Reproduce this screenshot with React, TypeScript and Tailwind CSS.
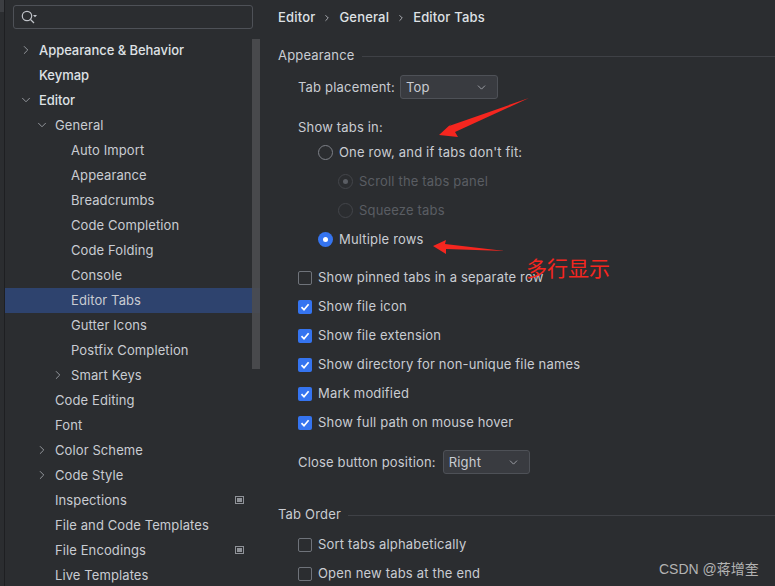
import { ChevronDown, ChevronRight } from "lucide-react";

type TreeItem = {
  label: string;
  indent: 0 | 1 | 2;
  arrow?: "right" | "down";
  bold?: boolean;
  selected?: boolean;
  badge?: boolean;
};

const tree: TreeItem[] = [
  { label: "Appearance & Behavior", indent: 0, arrow: "right", bold: true },
  { label: "Keymap", indent: 0, bold: true },
  { label: "Editor", indent: 0, arrow: "down", bold: true },
  { label: "General", indent: 1, arrow: "down" },
  { label: "Auto Import", indent: 2 },
  { label: "Appearance", indent: 2 },
  { label: "Breadcrumbs", indent: 2 },
  { label: "Code Completion", indent: 2 },
  { label: "Code Folding", indent: 2 },
  { label: "Console", indent: 2 },
  { label: "Editor Tabs", indent: 2, selected: true },
  { label: "Gutter Icons", indent: 2 },
  { label: "Postfix Completion", indent: 2 },
  { label: "Smart Keys", indent: 2, arrow: "right" },
  { label: "Code Editing", indent: 1 },
  { label: "Font", indent: 1 },
  { label: "Color Scheme", indent: 1, arrow: "right" },
  { label: "Code Style", indent: 1, arrow: "right" },
  { label: "Inspections", indent: 1, badge: true },
  { label: "File and Code Templates", indent: 1 },
  { label: "File Encodings", indent: 1, badge: true },
  { label: "Live Templates", indent: 1 },
];

const indentClass = {
  0: "pl-[34px]",
  1: "pl-[50px]",
  2: "pl-[66px]",
};

const arrowClass = {
  0: "left-[14px]",
  1: "left-[30px]",
  2: "left-[46px]",
};

function TreeRow({ item }: { item: TreeItem }) {
  return (
    <div
      className={`relative flex h-[25px] shrink-0 items-center ${indentClass[item.indent]} ${
        item.selected ? "bg-[#2e436e]" : ""
      } ${item.bold ? "font-medium tracking-[-0.05px] text-[#dfe1e5]" : "tracking-[0.1px] text-[#c9ccd2]"}`}
    >
      {item.arrow === "right" && (
        <ChevronRight className={`absolute top-[5px] h-[14px] w-[14px] text-[#a0a3a9] ${arrowClass[item.indent]}`} strokeWidth={1.5} />
      )}
      {item.arrow === "down" && (
        <ChevronDown className={`absolute top-[5px] h-[14px] w-[14px] text-[#a0a3a9] ${arrowClass[item.indent]}`} strokeWidth={1.5} />
      )}
      <span>{item.label}</span>
      {item.badge && (
        <span className="absolute left-[230px] top-[8px] flex h-[8px] w-[9px] items-center border border-[#8f9298] px-px">
          <span className="h-[4px] w-full bg-[#8f9298]" />
        </span>
      )}
    </div>
  );
}

function Checkbox({ label, checked }: { label: string; checked?: boolean }) {
  return (
    <div className="flex h-[29px] shrink-0 items-center gap-[6px]">
      {checked ? (
        <span className="flex h-[14px] w-[14px] items-center justify-center rounded-[2px] bg-[#3574f0]">
          <svg width="10" height="10" viewBox="0 0 10 10" fill="none">
            <path d="M1.5 5.2 4 7.8 8.6 2.2" stroke="#fff" strokeWidth="1.7" />
          </svg>
        </span>
      ) : (
        <span className="h-[14px] w-[14px] rounded-[2px] border border-[#6f737a]" />
      )}
      <span>{label}</span>
    </div>
  );
}

function Radio({ label, state, disabled }: { label: string; state?: "on" | "dot"; disabled?: boolean }) {
  let mark = <span className={`h-[15px] w-[15px] rounded-full border ${disabled ? "border-[#43454a]" : "border-[#7e8188]"}`} />;
  if (state === "on") {
    mark = (
      <span className="flex h-[15px] w-[15px] items-center justify-center rounded-full bg-[#3574f0]">
        <span className="h-[5px] w-[5px] rounded-full bg-white" />
      </span>
    );
  }
  if (state === "dot") {
    mark = (
      <span className="flex h-[15px] w-[15px] items-center justify-center rounded-full border border-[#43454a]">
        <span className="h-[5px] w-[5px] rounded-full bg-[#5a5d63]" />
      </span>
    );
  }
  return (
    <div className={`flex h-[29px] shrink-0 items-center gap-[6px] ${disabled ? "text-[#5a5d63]" : ""}`}>
      {mark}
      <span>{label}</span>
    </div>
  );
}

function Select({ value, width }: { value: string; width: string }) {
  return (
    <div className={`flex h-[24px] items-center justify-between rounded-[3px] border border-[#4e5157] bg-[#393b40] pl-[5px] pr-[9px] ${width}`}>
      <span className="pt-[2px]">{value}</span>
      <ChevronDown className="h-[13px] w-[13px] text-[#b0b3b9]" strokeWidth={1.5} />
    </div>
  );
}

function SectionTitle({ title }: { title: string }) {
  return (
    <div className="flex h-[20px] items-center gap-[7px]">
      <span>{title}</span>
      <div className="h-px flex-1 bg-[#3f4146]" />
    </div>
  );
}

export default function App() {
  return (
    <div className="relative flex h-[586px] w-[775px] overflow-hidden bg-[#2b2d30] font-['Inter',sans-serif] text-[13px] tracking-[0.18px] text-[#c9ccd2]">
      {/* Left strip */}
      <div className="w-[5px] shrink-0 border-r border-[#1e1f22] bg-[#2b2d30]">
        <div className="h-[12px] bg-[#3c3e42]" />
      </div>

      {/* Sidebar */}
      <div className="flex w-[255px] shrink-0 flex-col overflow-hidden">
        <div className="px-[8px] pt-[5px]">
          <div className="flex h-[24px] w-[240px] items-center rounded-[3px] border border-[#4e5157] pl-[6px]">
            <svg width="18" height="16" viewBox="0 0 18 16" fill="none">
              <circle cx="7" cy="7" r="4.7" stroke="#c0c3c9" strokeWidth="1.2" />
              <path d="M10.5 10.5 14 14" stroke="#c0c3c9" strokeWidth="1.2" />
              <path d="M13 6h4l-2 2.2z" fill="#c0c3c9" />
            </svg>
          </div>
        </div>
        <div className="relative mt-[9px] flex flex-col">
          {tree.map((item) => (
            <TreeRow key={item.label} item={item} />
          ))}
          {/* Scrollbar */}
          <div className="absolute left-[247px] top-px h-[330px] w-[8px] bg-[#4b4c50]/90" />
        </div>
      </div>

      {/* Settings pane */}
      <div className="flex min-w-0 flex-1 flex-col pl-[18px]">
        <div className="flex h-[36px] shrink-0 items-center gap-[7px] font-medium text-[#dfe1e5]">
          <span>Editor</span>
          <ChevronRight className="h-[10px] w-[10px] text-[#c0c3c9]" strokeWidth={2} />
          <span>General</span>
          <ChevronRight className="h-[10px] w-[10px] text-[#c0c3c9]" strokeWidth={2} />
          <span>Editor Tabs</span>
        </div>
        <div className="mt-[10px] shrink-0">
          <SectionTitle title="Appearance" />
        </div>
        <div className="flex shrink-0 flex-col pl-[20px]">
          <div className="mt-[9px] flex items-center gap-[5px]">
            <span className="pt-[2px]">Tab placement:</span>
            <Select value="Top" width="w-[98px]" />
          </div>
          <div className="mt-[18px] flex h-[21px] shrink-0 items-center">Show tabs in:</div>
          <div className="flex flex-col pl-[20px]">
            <Radio label="One row, and if tabs don't fit:" />
            <div className="flex flex-col pl-[20px]">
              <Radio label="Scroll the tabs panel" state="dot" disabled />
              <Radio label="Squeeze tabs" disabled />
            </div>
            <Radio label="Multiple rows" state="on" />
          </div>
          <div className="mt-[9px] flex flex-col">
            <Checkbox label="Show pinned tabs in a separate row" />
            <Checkbox label="Show file icon" checked />
            <Checkbox label="Show file extension" checked />
            <Checkbox label="Show directory for non-unique file names" checked />
            <Checkbox label="Mark modified" checked />
            <Checkbox label="Show full path on mouse hover" checked />
          </div>
          <div className="mt-[13px] flex items-center gap-[7px]">
            <span className="pt-[2px]">Close button position:</span>
            <Select value="Right" width="w-[87px]" />
          </div>
        </div>
        <div className="mt-[31px] shrink-0">
          <SectionTitle title="Tab Order" />
        </div>
        <div className="mt-[5px] flex shrink-0 flex-col pl-[20px]">
          <Checkbox label="Sort tabs alphabetically" />
          <Checkbox label="Open new tabs at the end" />
        </div>
      </div>

      {/* Red annotations on top of the screenshot */}
      <svg className="pointer-events-none absolute left-0 top-0" width="775" height="586" viewBox="0 0 775 586">
        <path d="M529 98 449 126 452 123 439 135 458 137 455 132Z" fill="#f5261f" />
        <path d="M505 251 445 244 446 240 433 246 446 254 446 249Z" fill="#f5261f" />
      </svg>
      <div className="absolute left-[526px] top-[253px] font-['Noto_Sans_CJK_SC',sans-serif] text-[21px] leading-[28px] tracking-normal text-[#f5261f]">
        多行显示
      </div>
      <div className="absolute left-[659px] top-[560px] font-['Liberation_Sans','Noto_Sans_CJK_SC',sans-serif] text-[14px] leading-[18px] tracking-normal text-[#b3b3b3]">
        CSDN @蒋增奎
      </div>
    </div>
  );
}
